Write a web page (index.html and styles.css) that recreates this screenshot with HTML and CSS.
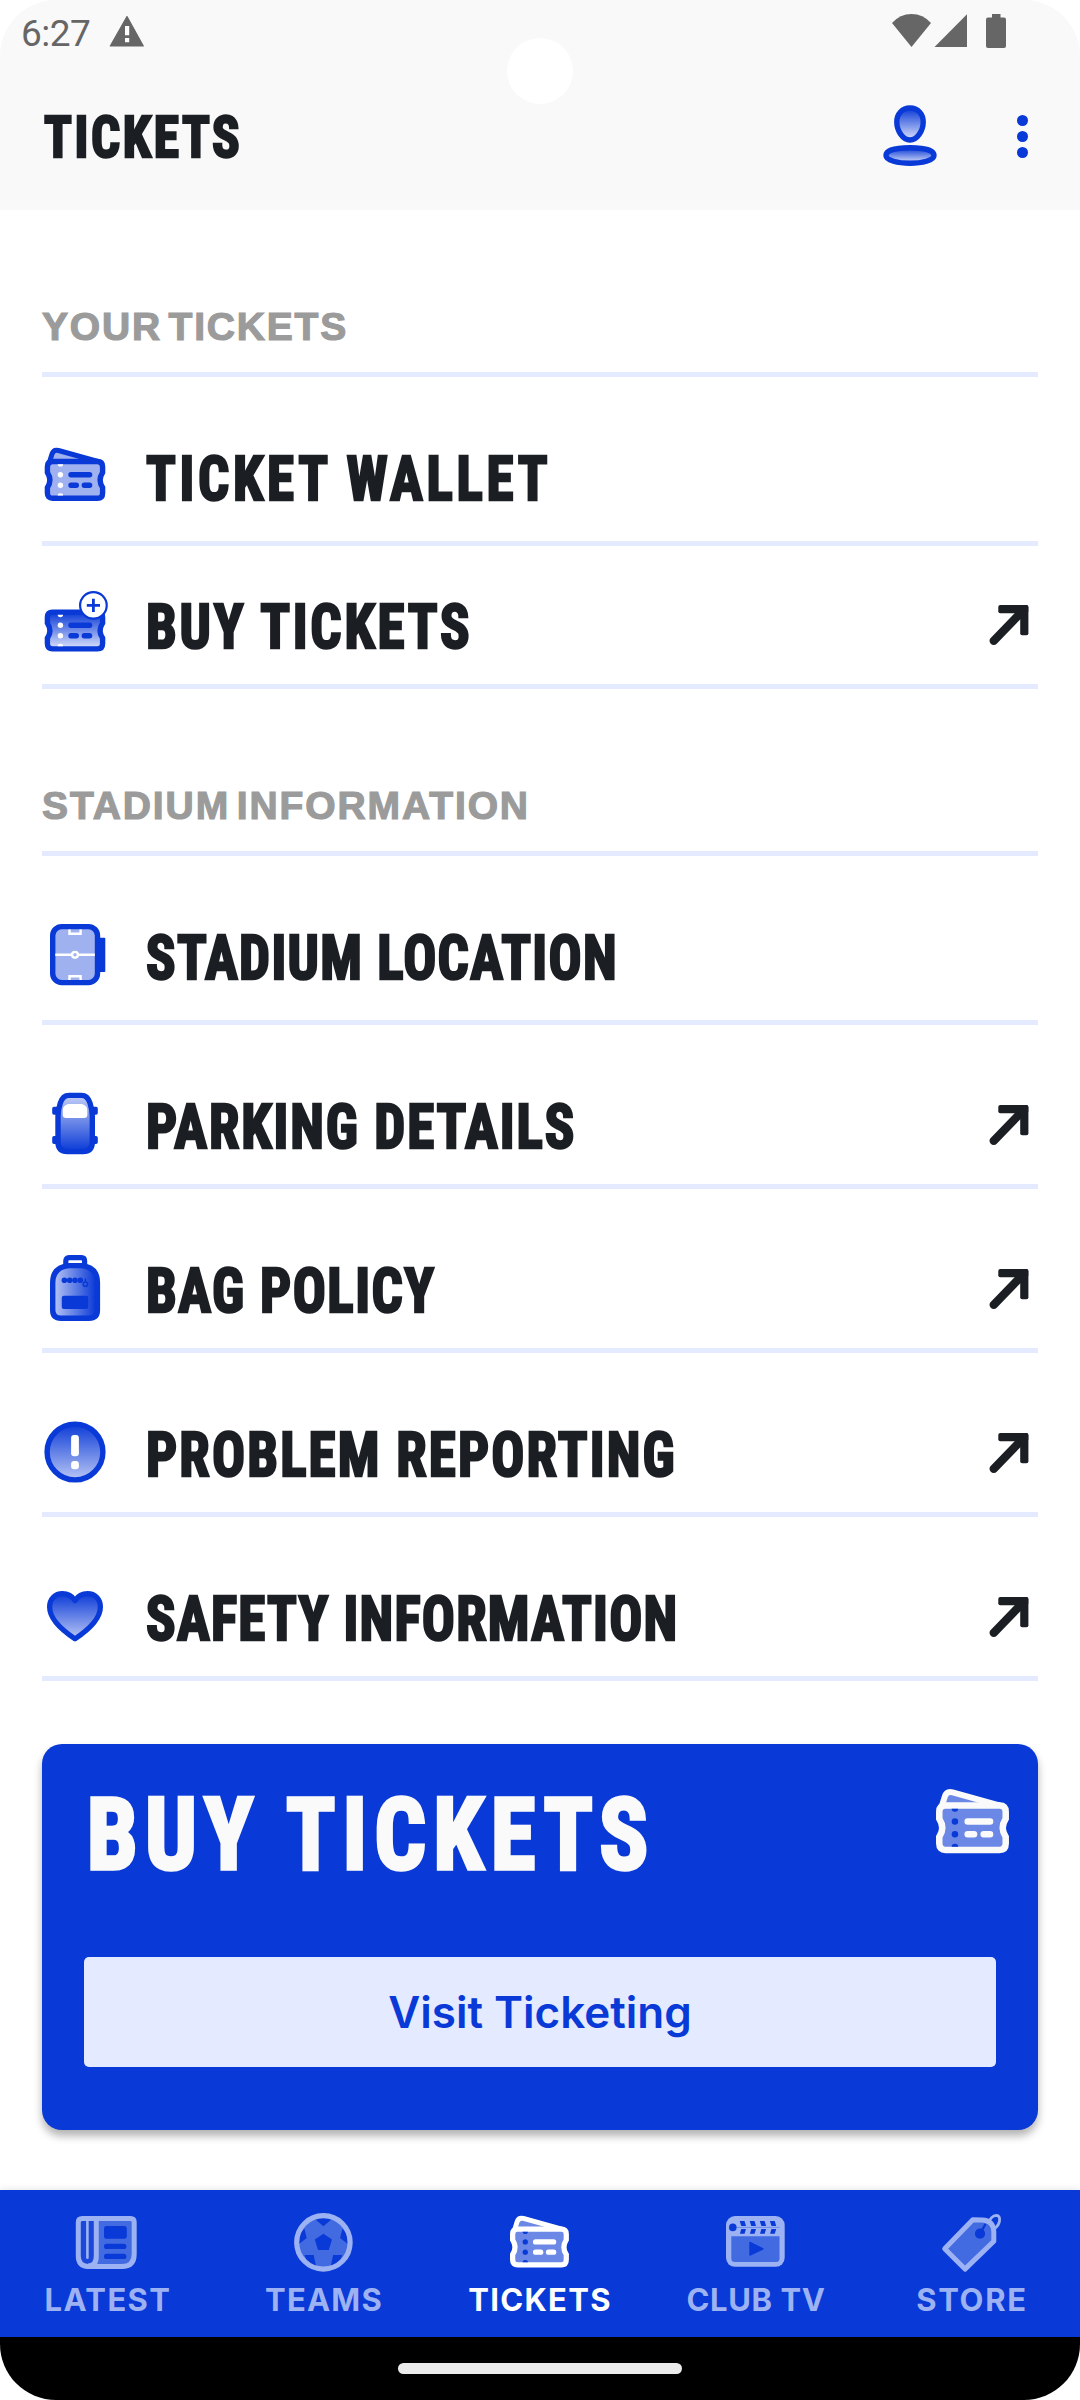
FILE: index.html
```html
<!DOCTYPE html>
<html lang="en">
<head>
<meta charset="utf-8">
<title>Tickets</title>
<link rel="stylesheet" href="styles.css">
</head>
<body>
<svg class="defs" aria-hidden="true">
  <defs>
    <linearGradient id="fade-down" x1="0" y1="0" x2="0" y2="1"><stop offset="0" stop-color="#0939d6"/><stop offset="1" stop-color="#dde3fb"/></linearGradient>
    <linearGradient id="fade-soft" x1="0" y1="0" x2="0" y2="1"><stop offset="0" stop-color="#0d3cd7"/><stop offset="1" stop-color="#b9c6f5"/></linearGradient>
    <linearGradient id="fade-up" x1="0" y1="1" x2="0" y2="0"><stop offset="0" stop-color="#0939d6"/><stop offset="1" stop-color="#c3cef7"/></linearGradient>
    <linearGradient id="fade-right" x1="0" y1="0" x2="1" y2="0"><stop offset="0.05" stop-color="#b3c1f4"/><stop offset="0.95" stop-color="#0d3cd7"/></linearGradient>
    <g id="ticket-front">
      <path stroke-width="5.4" d="M10.5 23.5H55.5Q60.6 23.5 60.6 28.7V34.5Q55.6 42.3 60.6 49.5V55Q60.6 60.3 55.5 60.3H10.5Q5.4 60.3 5.4 55V49.5Q10.4 42.3 5.4 34.5V28.7Q5.4 23.5 10.5 23.5Z"/>
      <g fill="currentColor" stroke="none">
        <circle cx="18.4" cy="36.7" r="2.7"/><circle cx="18.4" cy="47.2" r="2.7"/>
        <path d="M15.7 26.2a2.7 2.4 0 0 0 5.4 0zM15.7 57.6a2.7 2.4 0 0 1 5.4 0z"/>
      </g>
      <path fill="none" stroke-width="5.4" stroke-linecap="round" d="M29 36.7H47.6M29 47.2H34.3M42.3 47.2H47.6"/>
    </g>
    <g id="ticket-pair">
      <path stroke-width="5" stroke-linejoin="round" d="M7.5 24L10 16Q11.5 11.2 16.5 12.5L56 23.5Z"/>
      <use href="#ticket-front"/>
    </g>
    <g id="out-arrow">
      <path fill="none" stroke="currentColor" stroke-width="8.4" stroke-linecap="round" d="M5.7 54.8L35 24.5"/>
      <rect x="10.3" y="19" width="30" height="8.3" rx="2"/><rect x="32.2" y="19" width="8.2" height="30.3" rx="2"/>
    </g>
  </defs>
</svg>
<div class="phone">
  <header class="app-head">
    <div class="status">
      <span class="time">6:27</span>
      <svg class="warn" width="36" height="40" viewBox="0 0 36 40"><path d="M18 2.5L34.3 32H1.3Z" stroke="#666" stroke-width="1.2" stroke-linejoin="round"/><path fill="#fff" d="M16 12h4.2v9.2H16zM16 24h4.2v4.3H16z"/></svg>
      <svg width="39" height="40" viewBox="0 0 39 40"><path d="M19.5 33L0 9Q8 0 19.5 0T39 9Z"/></svg>
      <svg class="signal" width="33" height="40" viewBox="0 0 33 40"><path d="M.5 33L33 .3V33Z"/></svg>
      <svg class="battery" width="20" height="40" viewBox="0 0 20 40"><rect y="3.5" width="20" height="30.5" rx="2"/><rect x="6" width="8.5" height="5"/></svg>
    </div>
    <div class="toolbar">
      <h1 class="display page-title">TICKETS</h1>
      <svg class="person" width="56" height="70" viewBox="0 0 56 70"><g fill="url(#fade-down)" stroke="#0939d6" stroke-width="5.4"><path d="M28 6C36 6 41.2 12 41.2 20C41.2 29 35 38 28 38S14.8 29 14.8 20C14.8 12 20 6 28 6Z"/><path d="M28 45.8C42 45.8 52 48 52 53.5C52 58.5 40 61.3 28 61.3S4 58.5 4 53.5C4 48 14 45.8 28 45.8Z"/></g></svg>
      <svg width="20" height="70" viewBox="0 0 20 70" fill="#0939d6"><circle cx="10.5" cy="18.5" r="5.5"/><circle cx="10.5" cy="34.5" r="5.5"/><circle cx="10.5" cy="50.5" r="5.5"/></svg>
    </div>
    <span class="camera"></span>
  </header>

  <main class="content">
    <section>
      <h2 class="group-title your">YOUR TICKETS</h2>
      <ul class="menu">
        <li class="row tall">
          <svg class="icon" width="66" height="80" viewBox="0 0 66 80"><use href="#ticket-pair" fill="#9fb1ef" stroke="#0939d6" color="#fff"/></svg>
          <span class="display wallet">TICKET WALLET</span>
        </li>
        <li class="row short">
          <svg class="icon" width="66" height="80" viewBox="0 0 66 80"><use href="#ticket-front" y="2.6" fill="url(#fade-down)" stroke="#0939d6" color="#fff"/><circle cx="51.4" cy="19.4" r="13.3" fill="#fff" stroke="#0939d6" stroke-width="2.2"/><path stroke="#0939d6" stroke-width="2.8" d="M44.8 19.4H58M51.4 12.8V26"/></svg>
          <span class="display buy">BUY TICKETS</span>
          <svg class="arrow" width="44" height="80" viewBox="0 0 44 80"><use href="#out-arrow"/></svg>
        </li>
      </ul>
    </section>
    <section>
      <h2 class="group-title stadium-group">STADIUM INFORMATION</h2>
      <ul class="menu">
        <li class="row tall">
          <svg class="icon" width="66" height="80" viewBox="0 0 66 80"><rect x="56" y="20.7" width="7.3" height="34.3" rx="1" fill="#0939d6"/><rect x="10.7" y="9.6" width="44.8" height="56" rx="9" fill="#9fb1ef" stroke="#0939d6" stroke-width="5.4"/><g stroke="#fff" stroke-width="2.4" fill="none"><path d="M13.3 37.8H29.8M36.2 37.8H52.8M27.5 12.4V16.8H38.6V12.4M27.5 63V59.2H38.6V63"/><circle cx="33" cy="37.8" r="2.9"/></g></svg>
          <span class="display location">STADIUM LOCATION</span>
        </li>
        <li class="row">
          <svg class="icon" width="66" height="80" viewBox="0 0 66 80"><path fill="#0939d6" d="M12 20.7H54Q55.8 20.7 55.8 22.5V27Q55.8 28.8 54 28.8H12Q10.2 28.8 10.2 27V22.5Q10.2 20.7 12 20.7ZM12 50H54Q55.8 50 55.8 51.8V56.2Q55.8 58 54 58H12Q10.2 58 10.2 56.2V51.8Q10.2 50 12 50Z"/><path fill="url(#fade-up)" stroke="#0939d6" stroke-width="5.4" d="M27 9.4H39.5Q45.5 9.4 48 17Q50.3 24 50.3 30V56Q50.3 65.6 41 65.6H25.5Q16 65.6 16 56V30Q16 24 18.3 17Q20.8 9.4 27 9.4Z"/><path fill="#fff" d="M26 18H40Q45.3 19.5 45.3 24V29Q45.3 32 42 32H24Q20.8 32 20.8 29V24Q20.8 19.5 26 18Z"/></svg>
          <span class="display parking">PARKING DETAILS</span>
          <svg class="arrow" width="44" height="80" viewBox="0 0 44 80"><use href="#out-arrow"/></svg>
        </li>
        <li class="row">
          <svg class="icon" width="66" height="80" viewBox="0 0 66 80"><path fill="none" stroke="#0939d6" stroke-width="5.2" d="M23.8 16V11Q23.8 7.6 27 7.6H39.5Q42.6 7.6 42.6 11V16"/><path fill="url(#fade-right)" stroke="#0939d6" stroke-width="5.4" d="M27 15.6H39.5Q55.4 17 55.4 33V60Q55.4 68.2 47 68.2H19Q10.7 68.2 10.7 60V33Q10.7 17 27 15.6Z"/><g fill="#0939d6"><circle cx="22.4" cy="30.2" r="2.8"/><circle cx="27.7" cy="30.2" r="2.8"/><circle cx="33" cy="30.2" r="2.8"/><circle cx="38.3" cy="30.2" r="2.8"/><rect x="19.8" y="45.8" width="26.4" height="13.3" rx="2"/></g><path fill="none" stroke="#0939d6" stroke-width="1.6" d="M43.4 28.5V32"/><circle cx="43.4" cy="34.2" r="2.2" fill="none" stroke="#0939d6" stroke-width="1.6"/></svg>
          <span class="display bag">BAG POLICY</span>
          <svg class="arrow" width="44" height="80" viewBox="0 0 44 80"><use href="#out-arrow"/></svg>
        </li>
        <li class="row">
          <svg class="icon" width="66" height="80" viewBox="0 0 66 80"><circle cx="33" cy="38" r="27.9" fill="url(#fade-soft)" stroke="#0939d6" stroke-width="5.4"/><g fill="#fff"><rect x="29.1" y="21" width="7.8" height="21.3" rx="3"/><rect x="29.1" y="47" width="7.8" height="8.3" rx="3"/></g></svg>
          <span class="display problem">PROBLEM REPORTING</span>
          <svg class="arrow" width="44" height="80" viewBox="0 0 44 80"><use href="#out-arrow"/></svg>
        </li>
        <li class="row">
          <svg class="icon" width="66" height="80" viewBox="0 0 66 80"><path fill="url(#fade-soft)" stroke="#0939d6" stroke-width="5.2" stroke-linejoin="round" d="M33 60.8C22 53.5 7.6 42 7.6 29C7.6 21 13 15.7 20.5 15.7C26 15.7 30 18 33 22.5C36 18 40 15.7 45.5 15.7C53 15.7 58.4 21 58.4 29C58.4 42 44 53.5 33 60.8Z"/></svg>
          <span class="display safety">SAFETY INFORMATION</span>
          <svg class="arrow" width="44" height="80" viewBox="0 0 44 80"><use href="#out-arrow"/></svg>
        </li>
      </ul>
    </section>
    <section class="card">
      <div class="card-head">
        <h2 class="display card-title">BUY TICKETS</h2>
        <svg width="76" height="68" viewBox="1.87 8.04 63.1 56.5"><use href="#ticket-pair" fill="#6b88e6" stroke="#fafafa" color="#0939d6"/></svg>
      </div>
      <button class="visit">Visit Ticketing</button>
    </section>
  </main>

  <nav class="tabs">
    <a class="tab">
      <svg width="66" height="64" viewBox="0 0 66 64"><path fill="#426be2" d="M3.3 8.5H59.2V44Q59.2 56.5 47 56.5H13Q3.3 56.5 3.3 46Z"/><path fill="#1c48da" d="M3.3 8.5H21.5V46Q21.5 56 13 56T3.3 46Z"/><g fill="none" stroke="#9cb2f3" stroke-width="5"><path d="M7.5 8.5H55.5Q59.2 8.5 59.2 12.3V44Q59.2 56.5 47 56.5H13Q3.3 56 3.3 46V12.3Q3.3 8.5 7.5 8.5Z"/><path d="M21.3 8.5V46Q21.3 56 13 56"/><path stroke-width="2.6" stroke-linecap="round" d="M12.4 9V47.8"/></g><g fill="#0939d6"><rect x="29" y="16" width="22.8" height="12.8" rx="2.4"/><rect x="29" y="33.8" width="22.4" height="5.2" rx="2.6"/><rect x="29" y="43.8" width="22.4" height="5.2" rx="2.6"/></g></svg>
      <span class="latest">LATEST</span>
    </a>
    <a class="tab">
      <svg width="66" height="64" viewBox="0 0 66 64"><circle cx="32.4" cy="32.4" r="26.8" fill="#426be2"/><path fill="#0939d6" d="M32.4 23.7L41 29.6L37.8 40H27L23.8 29.6ZM23.5 8.7L32.4 16.2L41.3 8.7L32.4 6ZM13.4 18.7L15.7 28L8 34L6 27ZM51.4 18.7L49.1 28L56.8 34L58.8 27ZM13.5 45H22.7L25.2 57L17 54ZM51.3 45H42.1L39.6 57L47.8 54Z"/><circle cx="32.4" cy="32.4" r="26.7" fill="none" stroke="#9cb2f3" stroke-width="5.2"/></svg>
      <span class="teams">TEAMS</span>
    </a>
    <a class="tab active">
      <svg width="66" height="64" viewBox="-.39 3.84 67.9 65.8"><use href="#ticket-pair" fill="#6b88e6" stroke="#fff" color="#0939d6"/></svg>
      <span class="tickets">TICKETS</span>
    </a>
    <a class="tab">
      <svg width="66" height="64" viewBox="0 0 66 64"><rect x="3" y="6" width="58.7" height="50.8" rx="9" fill="#9cb2f3"/><path fill="#426be2" d="M8.3 26.3H56.5V48.5Q56.5 52 53 52H11.8Q8.3 52 8.3 48.5Z"/><path stroke="#6c8bea" stroke-width="1" d="M13 17.4H56.5"/><g fill="#0939d6"><circle cx="9.8" cy="17.4" r="3.8"/><path d="M27.2 31.8L40.4 38.2Q41 38.8 40.4 39.4L27.2 45.8Q26.3 45.8 26.3 45V32.6Q26.3 31.8 27.2 31.8Z"/><path id="slats" d="M16.7 11H21.5L23 15.9H18.3ZM18.3 19H23L21.5 23.8H16.9Z"/><use href="#slats" x="10"/><use href="#slats" x="20.1"/><use href="#slats" x="30.2"/></g></svg>
      <span class="club">CLUB TV</span>
    </a>
    <a class="tab">
      <svg width="66" height="64" viewBox="0 0 66 64"><g fill="none" stroke="#9cb2f3"><path stroke-width="2.8" d="M49 14C50.5 9.5 53.5 5.6 57.3 5.3C61.3 5.4 61.4 11 59.3 14.5C57.5 17.5 55 19.2 53.5 19.5"/><path fill="#426be2" stroke-width="5" stroke-linejoin="round" d="M5.7 38.8L26 59.1L54.8 31.2V21.5Q54.3 10.4 43.2 10L33.8 9.8Z"/></g><circle cx="41" cy="23.7" r="5.1" fill="#0939d6"/><path stroke="#0939d6" stroke-width="2.4" d="M42 22L46.5 14"/></svg>
      <span class="store">STORE</span>
    </a>
  </nav>
  <div class="gesture"><span class="pill"></span></div>
</div>
</body>
</html>
```
FILE: styles.css
```css
* { box-sizing: border-box; margin: 0; padding: 0; }
body { background: #fff; }
svg { display: block; flex: none; }
.defs { position: absolute; width: 0; height: 0; }

.phone {
  display: flex;
  flex-direction: column;
  width: 1080px;
  height: 2400px;
  background: #fff;
  border-radius: 56px;
  overflow: hidden;
}

/* Condensed display lettering */
.display {
  display: inline-block;
  font-family: "Roboto Condensed", Roboto, sans-serif;
  font-weight: 700;
  font-size: 61px;
  line-height: 82px;
  color: #1b1e23;
  white-space: nowrap;
  transform: scaleX(.9);
  transform-origin: left center;
  -webkit-text-stroke: 2.4px currentColor;
}

/* Header */
.app-head { position: relative; height: 210px; background: #f9f9f9; }
.status {
  display: flex;
  align-items: center;
  height: 64px;
  padding: 4px 74px 0 21px;
  fill: #666;
}
.time { width: 88px; font: 400 37px/44px Roboto, sans-serif; color: #666; letter-spacing: -.5px; }
.warn { margin-right: auto; }
.signal { margin-left: 3px; }
.battery { margin-left: 19px; }
.toolbar {
  display: flex;
  align-items: center;
  height: 146px;
  padding: 0 48px 0 44px;
}
.page-title { padding-top: 2px; font-size: 57px; letter-spacing: 2.9px; }
.person { margin: 0 74px 0 auto; }
.camera {
  position: absolute;
  top: 38px;
  left: 507px;
  width: 66px;
  height: 66px;
  border-radius: 50%;
  background: #fff;
}

/* Lists */
.content { flex: 1; padding: 0 42px; }
.group-title {
  height: 167px;
  padding-top: 92px;
  border-bottom: 5px solid #e4eaff;
  font: 700 39px/50px "Liberation Sans", sans-serif;
  color: #9b9b9b;
  -webkit-text-stroke: 1.2px currentColor;
  word-spacing: -6px;
}
.your { letter-spacing: 1.8px; }
.stadium-group { letter-spacing: 1.9px; }
.menu { list-style: none; }
.row {
  display: flex;
  align-items: flex-start;
  height: 164px;
  padding: 61px 6px 0 0;
  border-bottom: 5px solid #e4eaff;
}
.row.short { height: 143px; padding-top: 40px; }
.icon { margin-right: 38px; }
.arrow { margin-left: auto; color: #1b1e23; fill: #1b1e23; }
.row.tall { height: 169px; }
.wallet { letter-spacing: 4.1px; }
.buy { letter-spacing: 3.1px; }
.location { letter-spacing: 1.5px; }
.parking { letter-spacing: 2.1px; }
.bag { letter-spacing: 1.7px; }
.problem { letter-spacing: 2.4px; }
.safety { letter-spacing: 1.4px; }

/* Promo card */
.card {
  height: 386px;
  margin-top: 63px;
  padding: 30px 42px 0;
  border-radius: 20px;
  background: #0939d6;
  box-shadow: 0 6px 9px rgba(0, 0, 0, .3);
}
.card-head { display: flex; justify-content: space-between; height: 120px; margin-right: -15px; }
.card-head svg { margin-top: 13px; }
.card-title {
  padding-left: 3px;
  font-size: 101px;
  line-height: 121px;
  letter-spacing: 8px;
  color: #fafafa;
  -webkit-text-stroke-width: 3.6px;
}
.visit {
  display: block;
  width: 100%;
  height: 110px;
  margin-top: 63px;
  border: 0;
  border-radius: 5px;
  background: #e4eaff;
  color: #0939d6;
  font: 600 44px/110px Inter, sans-serif;
}

/* Bottom tabs */
.tabs {
  display: grid;
  grid-template-columns: repeat(5, 1fr);
  height: 147px;
  background: #0939d6;
  box-shadow: 0 0 8px rgba(0, 0, 0, .12);
}
.tab {
  display: flex;
  flex-direction: column;
  align-items: center;
  gap: 6px;
  padding-top: 20px;
  font: 700 31px/40px Inter, sans-serif;
  color: #9cb2f3;
}
.tab.active { color: #fff; }
.latest { letter-spacing: 1.4px; }
.teams { letter-spacing: 1.2px; }
.tickets { letter-spacing: 1.3px; }
.club { letter-spacing: .6px; }
.store { letter-spacing: 1.7px; }
.gesture { display: flex; align-items: center; justify-content: center; height: 63px; background: #000; }
.pill { width: 284px; height: 11px; border-radius: 6px; background: #ebebeb; }
```
